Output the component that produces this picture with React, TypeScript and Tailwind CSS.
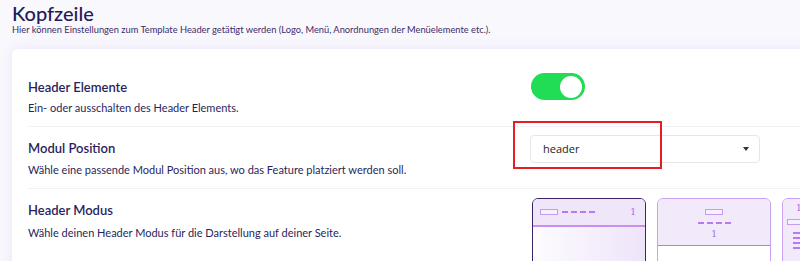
const Dashes = ({ className = '' }: { className?: string }) => (
    <div className={`flex gap-[3px] ${className}`}>
        <span className="w-[6px] h-[2px] bg-[#b77af2]" />
        <span className="w-[6px] h-[2px] bg-[#b77af2]" />
        <span className="w-[6px] h-[2px] bg-[#b77af2]" />
        <span className="w-[6px] h-[2px] bg-[#b77af2]" />
    </div>
)

const LogoBox = () => <div className="w-[18px] h-[6px] border border-[#c69cf2] bg-[#f6f0fd]" />

const Num = ({ className = '' }: { className?: string }) => (
    <span className={`text-[9px] leading-none text-[#a46be6] font-['DejaVu_Serif',serif] ${className}`}>1</span>
)

const App = () => {
    return (
        <div className="w-[800px] h-[261px] overflow-hidden bg-[#f9f8fd] pl-3 font-['Lato',sans-serif] text-[#2a1f5c]">
            <h1 className="text-[20px] leading-[24px] pt-[1px] font-medium text-[#231a5a]">Kopfzeile</h1>
            <p className="text-[9.3px] leading-[11px] mt-[-1px] text-[#3a2d6a]">
                Hier können Einstellungen zum Template Header getätigt werden (Logo, Menü, Anordnungen der Menüelemente etc.).
            </p>

            <div className="mt-[14px] w-[900px] bg-white rounded-md shadow-[0_0_14px_rgba(120,90,200,0.12)] pt-[17px] px-4">
                <div className="flex border-b border-[#f2f1f5] pb-[10px]">
                    <div className="w-[502px] pt-3">
                        <div className="text-[13px] leading-[18px] font-semibold">Header Elemente</div>
                        <div className="text-[11px] leading-[16px] mt-[4px]">Ein- oder ausschalten des Header Elements.</div>
                    </div>
                    <div className="pt-[7px] pl-[1px]">
                        <div className="w-[54px] h-[27px] rounded-full bg-[#21dc55] flex items-center justify-end pr-[3px]">
                            <div className="w-[22px] h-[22px] rounded-full bg-white" />
                        </div>
                    </div>
                </div>

                <div className="flex border-b border-[#f2f1f5] pb-[10px]">
                    <div className="w-[502px] pt-3">
                        <div className="text-[13px] leading-[18px] font-semibold">Modul Position</div>
                        <div className="text-[11px] leading-[16px] mt-[5px]">Wähle eine passende Modul Position aus, wo das Feature platziert werden soll.</div>
                    </div>
                    <div className="pt-[8px] relative">
                        <div className="w-[230px] h-[28px] border border-[#e6e6e8] rounded-[4px] flex items-center justify-between pl-3 pr-[10px] text-[11px] text-[#222] font-['Open_Sans',sans-serif]">
                            header
                            <span className="w-0 h-0 border-l-[3.5px] border-r-[3.5px] border-t-[4px] border-l-transparent border-r-transparent border-t-[#333]" />
                        </div>
                        <div className="absolute left-[-17px] top-[-6px] w-[149px] h-[48px] border-2 border-[#e31e24]" />
                    </div>
                </div>

                <div className="flex">
                    <div className="w-[502px] pt-3">
                        <div className="text-[13px] leading-[18px] font-semibold">Header Modus</div>
                        <div className="text-[11px] leading-[16px] mt-[6px]">Wähle deinen Header Modus für die Darstellung auf deiner Seite.</div>
                    </div>
                    <div className="pt-[9px] pl-[2px] flex gap-[11px]">
                        <div className="w-[114px] h-[90px] rounded-[6px] border border-[#3c2366] overflow-hidden flex flex-col">
                            <div className="h-[28px] bg-[#efe6fa] flex items-center pl-[7px] pr-[9px] border-b-2 border-[#c88ff0]">
                                <LogoBox />
                                <Dashes className="ml-[4px]" />
                                <Num className="ml-auto" />
                            </div>
                            <div className="flex-1 bg-gradient-to-r from-[#fdfcff] to-[#eee4f9]" />
                        </div>
                        <div className="w-[114px] h-[90px] rounded-[6px] border border-[#c99ff2] overflow-hidden flex flex-col">
                            <div className="h-[47px] bg-[#f2eafb] flex flex-col items-center pt-[10px] border-b border-[#b57af0]">
                                <LogoBox />
                                <Dashes className="mt-[7px]" />
                                <Num className="mt-[6px]" />
                            </div>
                            <div className="flex-1 bg-white" />
                        </div>
                        <div className="w-[114px] h-[90px] rounded-[6px] border border-[#c99ff2] overflow-hidden flex">
                            <div className="w-[34px] bg-[#f2eafb] flex flex-col items-start pl-[4px] pt-[5px] border-r border-[#b57af0]">
                                <Num className="ml-[9px]" />
                                <div className="mt-[6px]"><LogoBox /></div>
                                <div className="mt-[7px] ml-[6px] flex flex-col gap-[3px]">
                                    <span className="w-[10px] h-[2px] bg-[#b77af2]" />
                                    <span className="w-[10px] h-[2px] bg-[#b77af2]" />
                                    <span className="w-[10px] h-[2px] bg-[#b77af2]" />
                                    <span className="w-[10px] h-[2px] bg-[#b77af2]" />
                                </div>
                            </div>
                            <div className="flex-1 bg-white" />
                        </div>
                    </div>
                </div>
            </div>
        </div>
    )
}

export default App
